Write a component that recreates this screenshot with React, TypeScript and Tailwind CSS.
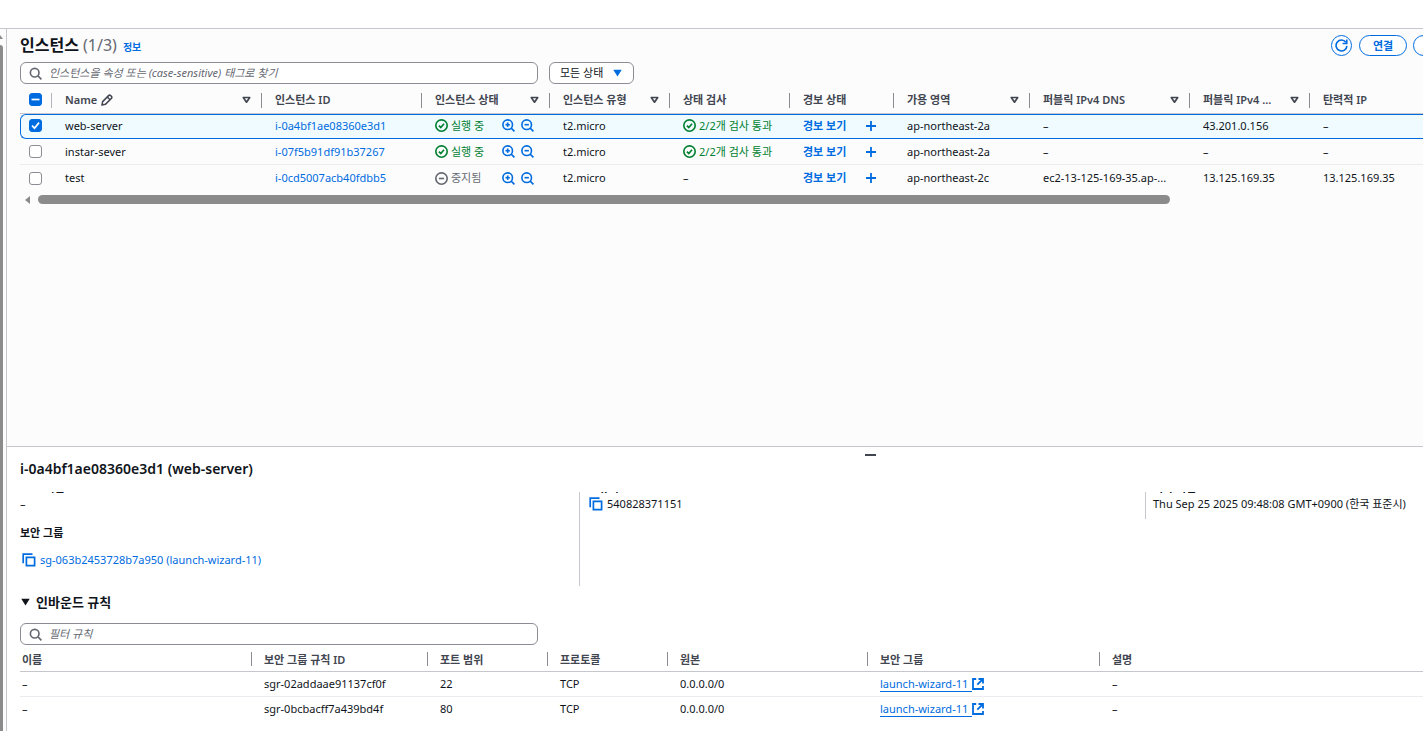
import { ReactNode, useState } from 'react';
import clsx from 'clsx';

interface Instance {
  name: string;
  id: string;
  running: boolean;
  type: string;
  checks: string;
  zone: string;
  dns: string;
  ipv4: string;
  elasticIp: string;
}

const instances: Instance[] = [
  {
    name: 'web-server',
    id: 'i-0a4bf1ae08360e3d1',
    running: true,
    type: 't2.micro',
    checks: '2/2개 검사 통과',
    zone: 'ap-northeast-2a',
    dns: '–',
    ipv4: '43.201.0.156',
    elasticIp: '–',
  },
  {
    name: 'instar-sever',
    id: 'i-07f5b91df91b37267',
    running: true,
    type: 't2.micro',
    checks: '2/2개 검사 통과',
    zone: 'ap-northeast-2a',
    dns: '–',
    ipv4: '–',
    elasticIp: '–',
  },
  {
    name: 'test',
    id: 'i-0cd5007acb40fdbb5',
    running: false,
    type: 't2.micro',
    checks: '–',
    zone: 'ap-northeast-2c',
    dns: 'ec2-13-125-169-35.ap-...',
    ipv4: '13.125.169.35',
    elasticIp: '13.125.169.35',
  },
];

const columns = [
  { label: 'Name', width: 'w-[210px]', sortable: true, editable: true },
  { label: '인스턴스 ID', width: 'w-[160px]' },
  { label: '인스턴스 상태', width: 'w-[128px]', sortable: true },
  { label: '인스턴스 유형', width: 'w-[120px]', sortable: true },
  { label: '상태 검사', width: 'w-[120px]' },
  { label: '경보 상태', width: 'w-[104px]' },
  { label: '가용 영역', width: 'w-[136px]', sortable: true },
  { label: '퍼블릭 IPv4 DNS', width: 'w-[160px]', sortable: true },
  { label: '퍼블릭 IPv4 ...', width: 'w-[120px]', sortable: true },
  { label: '탄력적 IP', width: 'w-[160px]' },
];

const rules = [
  { id: 'sgr-02addaae91137cf0f', port: '22' },
  { id: 'sgr-0bcbacff7a439bd4f', port: '80' },
];

const ruleColumns = [
  { label: '이름', width: 'w-[232px]' },
  { label: '보안 그룹 규칙 ID', width: 'w-[176px]' },
  { label: '포트 범위', width: 'w-[120px]' },
  { label: '프로토콜', width: 'w-[120px]' },
  { label: '원본', width: 'w-[200px]' },
  { label: '보안 그룹', width: 'w-[232px]' },
  { label: '설명', width: '' },
];

function SearchIcon() {
  return (
    <svg viewBox="0 0 16 16" className="h-[13px] w-[13px] shrink-0 text-[#656871]" fill="none" stroke="currentColor" strokeWidth="2">
      <circle cx="7" cy="7" r="5.3" />
      <path d="M11 11l4.3 4.3" />
    </svg>
  );
}

function SortIcon() {
  return (
    <svg viewBox="0 0 9 8" className="h-2 w-[9px]" fill="none" stroke="currentColor" strokeWidth="1.7" strokeLinejoin="round">
      <path d="M1.3 1.5h6.4L4.5 6.2z" />
    </svg>
  );
}

function Caret() {
  return (
    <svg viewBox="0 0 9 8" className="h-2 w-[9px]" fill="currentColor">
      <path d="M.3 .8h8.4L4.5 7.5z" />
    </svg>
  );
}

function PencilIcon() {
  return (
    <svg viewBox="0 0 16 16" className="h-3 w-3" fill="none" stroke="currentColor" strokeWidth="2" strokeLinejoin="round">
      <path d="M1.2 14.8l1-4.6 7.9-8a2 2 0 0 1 2.8 0l.9.9a2 2 0 0 1 0 2.8l-8 7.9z" />
      <path d="M8.4 4l3.6 3.6" />
    </svg>
  );
}

function CheckCircle() {
  return (
    <svg viewBox="0 0 16 16" className="h-[13px] w-[13px] shrink-0" fill="none" stroke="currentColor" strokeWidth="2">
      <circle cx="8" cy="8" r="7" />
      <path d="M4.8 8.2l2.3 2.2 4-4.6" />
    </svg>
  );
}

function StoppedCircle() {
  return (
    <svg viewBox="0 0 16 16" className="h-[13px] w-[13px] shrink-0" fill="none" stroke="currentColor" strokeWidth="2">
      <circle cx="8" cy="8" r="7" />
      <path d="M4.8 8h6.4" />
    </svg>
  );
}

function Magnifier({ plus }: { plus?: boolean }) {
  return (
    <svg viewBox="0 0 16 16" className="h-[13px] w-[13px]" fill="none" stroke="currentColor" strokeWidth="2">
      <circle cx="7" cy="7" r="5.9" />
      <path d="M11 11l4.3 4.3" />
      <path d="M4.3 7h5.4" />
      {plus && <path d="M7 4.3v5.4" />}
    </svg>
  );
}

function PlusIcon() {
  return (
    <svg viewBox="0 0 10 10" className="h-2.5 w-2.5" stroke="currentColor" strokeWidth="1.8">
      <path d="M5 0v10M0 5h10" />
    </svg>
  );
}

function CopyIcon() {
  return (
    <svg viewBox="0 0 14 14" className="h-3.5 w-3.5 shrink-0 text-[#006ce0]" fill="none" stroke="currentColor" strokeWidth="1.7">
      <path d="M10.5 1.2H1.2v9" />
      <path d="M4.4 4.4h8.2v8.2H4.4z" />
    </svg>
  );
}

function ExternalIcon() {
  return (
    <svg viewBox="0 0 12 12" className="h-3 w-3 shrink-0" fill="none" stroke="currentColor" strokeWidth="1.8">
      <path d="M4.2 1H1v10h10V8" />
      <path d="M6.5 1H11v4.5M11 1L5.3 6.7" />
    </svg>
  );
}

function RefreshIcon() {
  return (
    <svg viewBox="0 0 16 16" className="h-[13px] w-[13px]" fill="none" stroke="currentColor" strokeWidth="2">
      <path d="M14.7 8.5A6.7 6.7 0 1 1 13.4 4" />
      <path d="M14.5 .5v5H9.3" />
    </svg>
  );
}

interface TickBoxProps {
  label: string;
  checked: boolean;
  mixed?: boolean;
  onChange: () => void;
}

function TickBox({ label, checked, mixed, onChange }: TickBoxProps) {
  return (
    <label className="grid h-[13px] w-[13px]">
      <input
        type="checkbox"
        aria-label={label}
        checked={checked}
        onChange={onChange}
        className="col-start-1 row-start-1 h-[13px] w-[13px] appearance-none rounded-[3px] border border-[#8c8c94] bg-white checked:border-[#006ce0] checked:bg-[#006ce0]"
      />
      {checked && (
        <svg viewBox="0 0 13 13" className="pointer-events-none z-10 col-start-1 row-start-1 h-[13px] w-[13px]" fill="none" stroke="white" strokeWidth="1.7">
          <path d={mixed ? 'M2.5 6.5h8' : 'M3 6.7l2.5 2.5L10 3.6'} />
        </svg>
      )}
    </label>
  );
}

function SearchBox({ id, placeholder }: { id: string; placeholder: string }) {
  return (
    <label
      htmlFor={id}
      className="flex h-[22px] w-[518px] items-center gap-[7px] rounded-md border border-[#8c8c94] bg-white px-2"
    >
      <SearchIcon />
      <input
        id={id}
        type="search"
        placeholder={placeholder}
        aria-label={placeholder}
        className="h-4 w-full bg-transparent outline-none placeholder:italic placeholder:text-[#656871]"
      />
    </label>
  );
}

function Cell({ selected, divider, children }: { selected: boolean; divider: boolean; children: ReactNode }) {
  return (
    <td
      className={clsx(
        'pl-[13px] whitespace-nowrap',
        selected && 'border-y border-[#006ce0] bg-[#f0fbff] pb-0.5',
        divider && 'border-b border-[#ebebf0]'
      )}
    >
      {children}
    </td>
  );
}

function InstanceTable() {
  const [selectedId, setSelectedId] = useState(instances[0].id);

  return (
    <div className="overflow-hidden">
      <table className="w-[1450px] table-fixed border-separate border-spacing-0 text-left">
        <thead className="text-[#424650]">
          <tr className="h-[26px]">
            <th className="w-8 border-b border-[#c6c6cd] p-0">
              <div className="flex h-[15px] items-center border-r border-[#b4b4bb] pb-0.5 pl-[9px]">
                <TickBox label="모두 선택" checked={selectedId !== ''} mixed onChange={() => setSelectedId('')} />
              </div>
            </th>
            {columns.map((column, index) => (
              <th key={column.label} className={clsx('border-b border-[#c6c6cd] p-0 font-semibold', column.width)}>
                <div
                  className={clsx(
                    'flex h-[15px] items-center gap-1 pr-[10px] pb-0.5 pl-[13px] whitespace-nowrap',
                    index < columns.length - 1 && 'border-r border-[#8c8c94]'
                  )}
                >
                  {column.label}
                  {column.editable && <PencilIcon />}
                  {column.sortable && (
                    <button type="button" aria-label={`${column.label} 정렬`} className="ml-auto">
                      <SortIcon />
                    </button>
                  )}
                </div>
              </th>
            ))}
          </tr>
        </thead>
        <tbody>
          {instances.map((instance, index) => {
            const selected = instance.id === selectedId;
            const divider = !selected && index < instances.length - 1;
            const cell = { selected, divider };

            return (
              <tr key={instance.id} className={selected ? 'h-[25px]' : 'h-[26px]'}>
                <td
                  className={clsx(
                    'p-0',
                    selected && 'rounded-l-md border-y border-l border-[#006ce0] bg-[#f0fbff] pb-0.5 pl-2',
                    !selected && 'pl-[9px]',
                    divider && 'border-b border-[#ebebf0]'
                  )}
                >
                  <TickBox
                    label={instance.name}
                    checked={selected}
                    onChange={() => setSelectedId(selected ? '' : instance.id)}
                  />
                </td>
                <Cell {...cell}>{instance.name}</Cell>
                <Cell {...cell}>
                  <a href="#instance" className="text-[#006ce0]">
                    {instance.id}
                  </a>
                </Cell>
                <Cell {...cell}>
                  <div className="flex items-center">
                    <span
                      className={clsx(
                        'flex w-[67px] items-center gap-[3px]',
                        instance.running ? 'text-[#00802f]' : 'text-[#656871]'
                      )}
                    >
                      {instance.running ? <CheckCircle /> : <StoppedCircle />}
                      {instance.running ? '실행 중' : '중지됨'}
                    </span>
                    <span className="flex gap-1.5 text-[#006ce0]">
                      <button type="button" aria-label="필터에 포함">
                        <Magnifier plus />
                      </button>
                      <button type="button" aria-label="필터에서 제외">
                        <Magnifier />
                      </button>
                    </span>
                  </div>
                </Cell>
                <Cell {...cell}>{instance.type}</Cell>
                <Cell {...cell}>
                  {instance.running ? (
                    <span className="flex items-center gap-[3px] text-[#00802f]">
                      <CheckCircle />
                      {instance.checks}
                    </span>
                  ) : (
                    instance.checks
                  )}
                </Cell>
                <Cell {...cell}>
                  <div className="flex items-center text-[#006ce0]">
                    <a href="#alarms" className="w-[63px] font-bold">
                      경보 보기
                    </a>
                    <button type="button" aria-label="경보 생성">
                      <PlusIcon />
                    </button>
                  </div>
                </Cell>
                <Cell {...cell}>{instance.zone}</Cell>
                <Cell {...cell}>{instance.dns}</Cell>
                <Cell {...cell}>{instance.ipv4}</Cell>
                <Cell {...cell}>{instance.elasticIp}</Cell>
              </tr>
            );
          })}
        </tbody>
      </table>
    </div>
  );
}

function RuleTable() {
  return (
    <table className="w-full table-fixed border-separate border-spacing-0 text-left">
      <thead className="text-[#424650]">
        <tr className="h-[25px]">
          {ruleColumns.map((column, index) => (
            <th key={column.label} className={clsx('border-b border-[#c6c6cd] p-0 font-semibold', column.width)}>
              <div
                className={clsx(
                  'flex h-3.5 items-center pt-0.5 whitespace-nowrap',
                  index === 0 ? 'pl-0.5' : 'pl-3',
                  index < ruleColumns.length - 1 && 'border-r border-[#8c8c94]'
                )}
              >
                {column.label}
              </div>
            </th>
          ))}
        </tr>
      </thead>
      <tbody className="[&_td]:border-b [&_td]:border-transparent [&_td]:p-0 [&_td]:pl-3 [&_td:first-child]:pl-0.5 [&_tr:first-child_td]:border-[#ebebf0]">
        {rules.map((rule) => (
          <tr key={rule.id} className="h-[25px]">
            <td>–</td>
            <td>{rule.id}</td>
            <td>{rule.port}</td>
            <td>TCP</td>
            <td>0.0.0.0/0</td>
            <td>
              <a href="#group" className="flex items-center text-[#006ce0]">
                <span className="border-b border-[#006ce0] pr-1 leading-[14px]">launch-wizard-11</span>
                <ExternalIcon />
              </a>
            </td>
            <td>–</td>
          </tr>
        ))}
      </tbody>
    </table>
  );
}

function DetailPanel() {
  return (
    <section className="border-t border-[#c6c6cd] bg-white pb-[9px] pl-[13px]">
      <div className="flex h-[13px] items-center pt-0.5">
        <button type="button" aria-label="패널 크기 조정" className="ml-[845px] h-0.5 w-[11px] bg-[#424650]" />
      </div>
      <h2 className="text-sm leading-[18px] font-semibold">i-0a4bf1ae08360e3d1 (web-server)</h2>

      {/* scrolled body: the first row of labels is mostly under the title */}
      <div className="mt-3.5 overflow-hidden">
        <dl className="-mt-3 grid grid-cols-[559fr_566fr_278fr] items-start">
          <div className="h-[106px]">
            <dt className="h-4 font-semibold">IAM 역할</dt>
            <dd className="h-4">–</dd>
            <dt className="mt-[13px] h-4 font-semibold">보안 그룹</dt>
            <dd className="mt-[11px] flex h-4 items-center gap-1 pl-0.5">
              <CopyIcon />
              <a href="#sg" className="text-[#006ce0]">
                sg-063b2453728b7a950 (launch-wizard-11)
              </a>
            </dd>
          </div>
          <div className="h-[106px] border-l border-[#c6c6cd] pl-[9px]">
            <dt className="h-4 font-semibold">소유자 ID</dt>
            <dd className="flex h-4 items-center gap-1">
              <CopyIcon />
              540828371151
            </dd>
          </div>
          <div className="h-[39px] border-l border-[#c6c6cd] pl-[7px] whitespace-nowrap">
            <dt className="h-4 font-semibold">시작 시간</dt>
            <dd className="h-4">Thu Sep 25 2025 09:48:08 GMT+0900 (한국 표준시)</dd>
          </div>
        </dl>
      </div>

      <h3 className="mt-[7px] text-[13px] leading-[18px] font-semibold">
        <button type="button" className="flex items-center gap-1.5 pl-px">
          <Caret />
          인바운드 규칙
        </button>
      </h3>
      <div className="mt-3">
        <SearchBox id="rule-filter" placeholder="필터 규칙" />
      </div>
      <div className="mt-0.5">
        <RuleTable />
      </div>
    </section>
  );
}

export default function App() {
  return (
    <div className="flex min-h-screen flex-col overflow-hidden bg-white pt-7 font-['Noto_Sans','Noto_Sans_CJK_KR',sans-serif] text-[11px] leading-4 text-[#0f141a]">
      <div className="flex grow border-t border-[#c6c6cd]">
        {/* page scrollbar */}
        <div className="flex w-1.5 shrink-0 flex-col bg-[#fcfcfd]">
          <svg viewBox="0 0 3 4" className="mt-1.5 h-1 w-[3px] text-[#8b8b8b]" fill="currentColor">
            <path d="M0 0l3 4H0z" />
          </svg>
          <div className="mt-1.5 w-[3px] grow rounded-tr-sm bg-[#8b8b8b]" />
        </div>

        <main className="flex min-w-0 grow flex-col border-l border-[#c6c6cd]">
          <section className="grow bg-[#fcfcfd] pl-[13px]">
            <header className="flex h-[33px] items-center">
              <h1 className="mb-0.5 text-base font-bold">
                인스턴스 <span className="font-normal text-[#656871]">(1/3)</span>
              </h1>
              <a href="#info" className="mt-0.5 ml-1.5 text-[10px] font-bold text-[#006ce0]">
                정보
              </a>
              <div className="mt-0.5 ml-auto flex text-[#006ce0]">
                <button
                  type="button"
                  aria-label="새로 고침"
                  className="flex h-[21px] w-[21px] items-center justify-center rounded-full border border-[#006ce0] bg-white"
                >
                  <RefreshIcon />
                </button>
                <button
                  type="button"
                  className="ml-[7px] h-[21px] w-12 rounded-full border border-[#006ce0] bg-white leading-[19px] font-bold"
                >
                  연결
                </button>
                <div className="ml-1.5 w-2.5 overflow-hidden">
                  <button
                    type="button"
                    aria-label="인스턴스 상태"
                    className="h-[21px] w-24 rounded-full border border-[#006ce0] bg-white"
                  />
                </div>
              </div>
            </header>

            <div className="flex gap-[11px]">
              <SearchBox id="instance-filter" placeholder="인스턴스을 속성 또는 (case-sensitive) 태그로 찾기" />
              <div className="grid w-[85px] items-center">
                <select
                  aria-label="상태 필터"
                  className="col-start-1 row-start-1 h-[22px] w-full appearance-none rounded-md border border-[#8c8c94] bg-white pl-2.5"
                >
                  <option>모든 상태</option>
                </select>
                <span className="pointer-events-none z-10 col-start-1 row-start-1 mr-3 justify-self-end text-[#006ce0]">
                  <Caret />
                </span>
              </div>
            </div>

            <div className="mt-1">
              <InstanceTable />
            </div>

            {/* horizontal table scrollbar */}
            <div className="mt-1 flex items-center gap-2 pl-[5px]">
              <svg viewBox="0 0 5 8" className="h-2 w-[5px] text-[#8b8b8b]" fill="currentColor">
                <path d="M5 0v8L0 4z" />
              </svg>
              <div className="h-[9px] w-[81%] rounded-full bg-[#8b8b8b]" />
            </div>
          </section>

          <DetailPanel />
        </main>
      </div>
    </div>
  );
}
